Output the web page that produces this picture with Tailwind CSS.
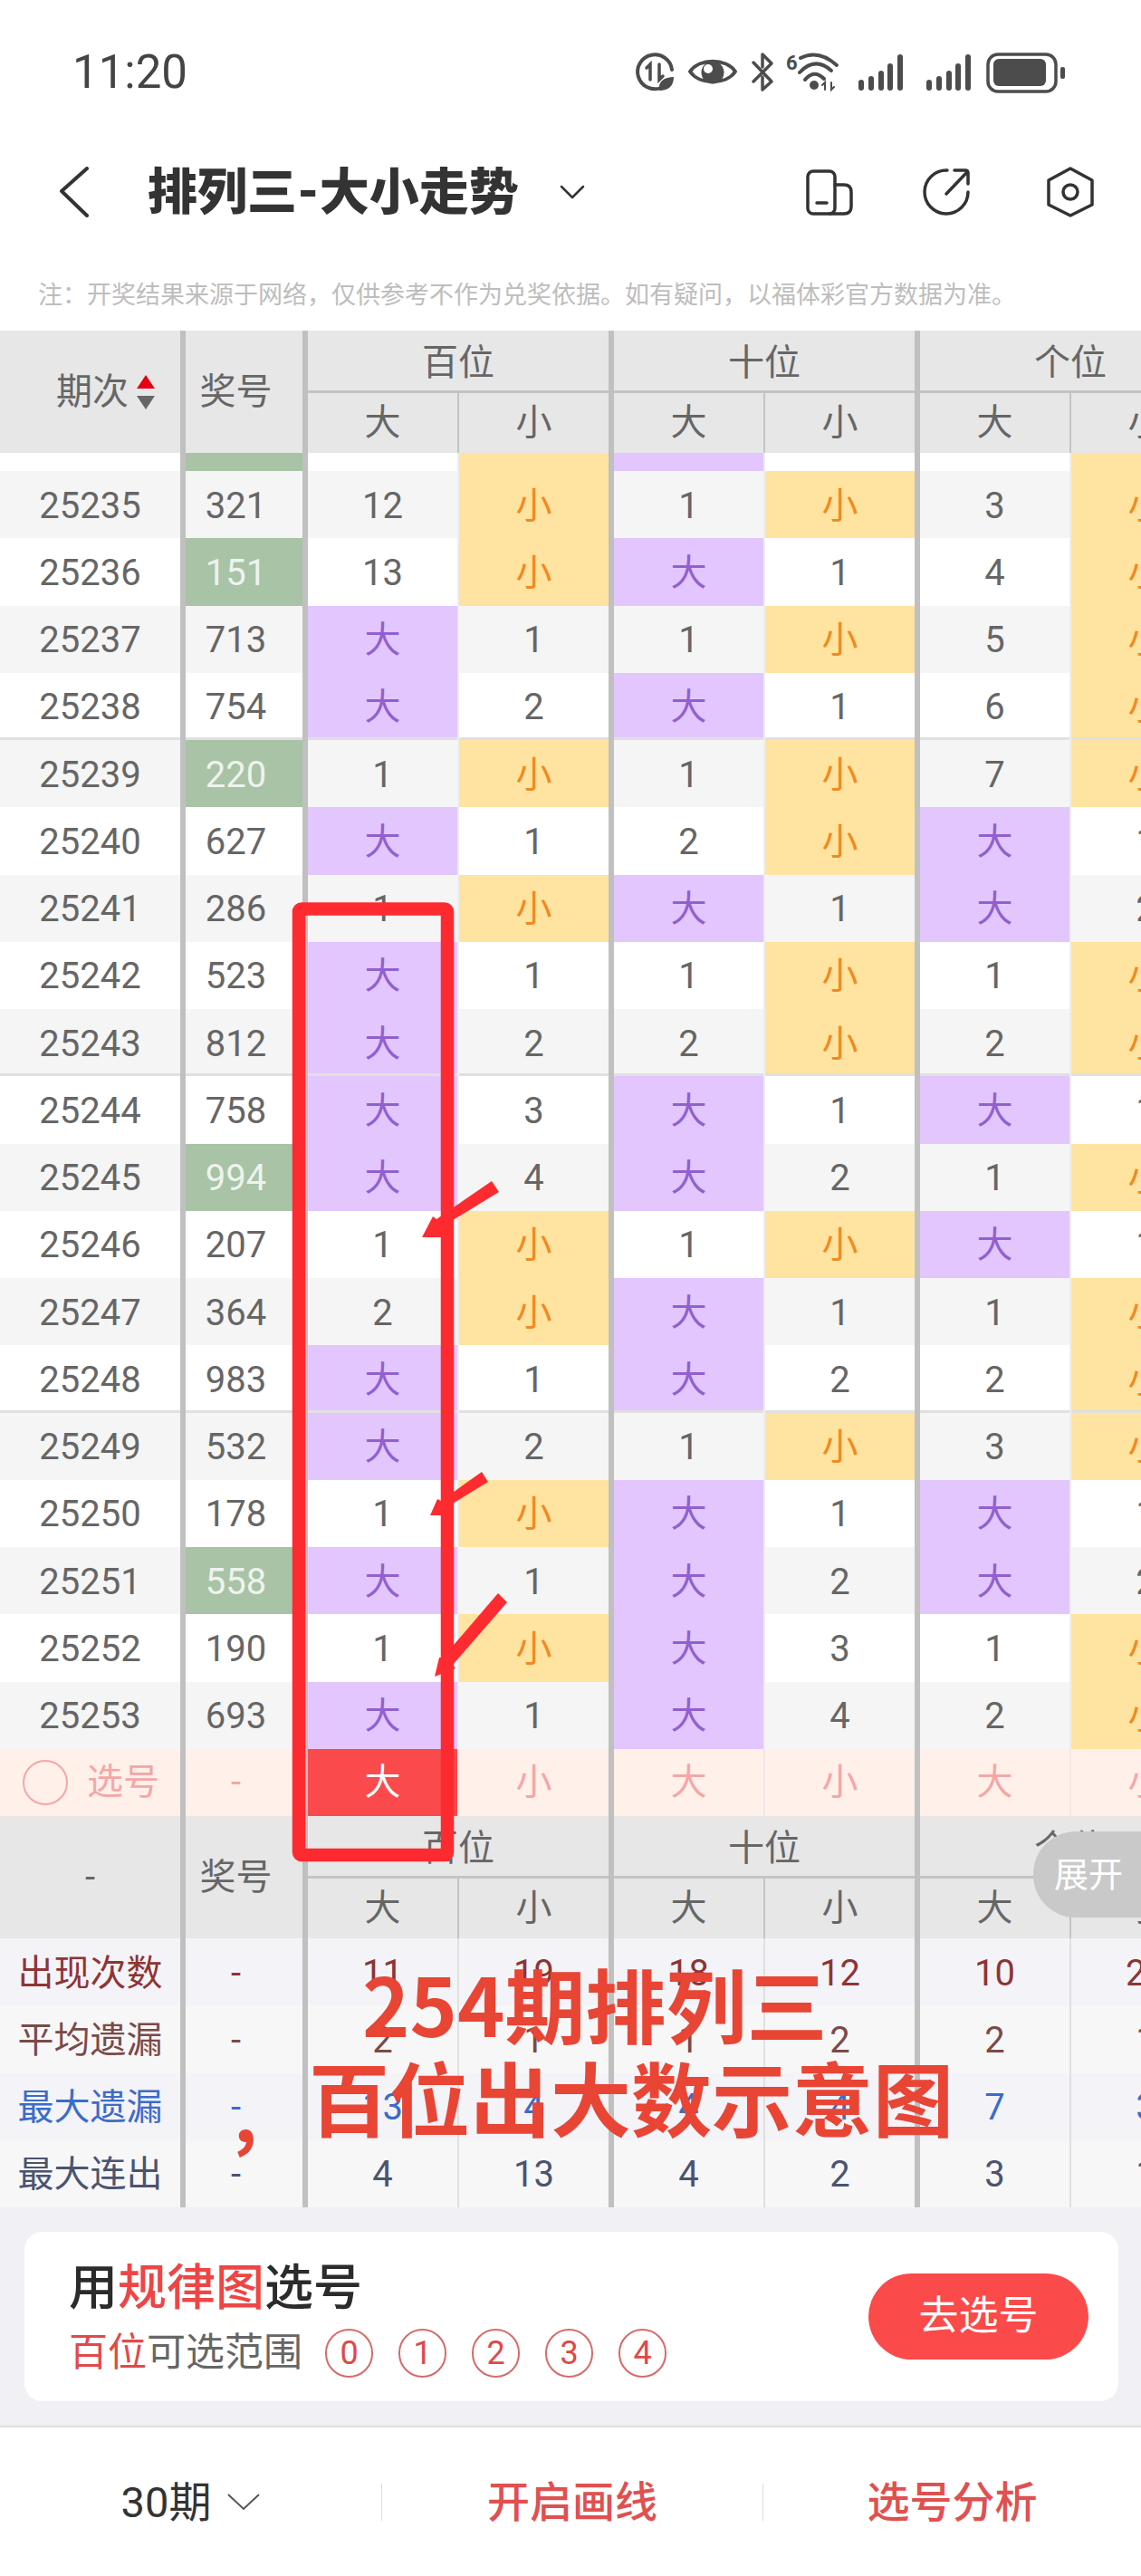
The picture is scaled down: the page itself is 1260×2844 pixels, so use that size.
<!DOCTYPE html>
<html lang="zh-CN">
<head>
    <meta charset="UTF-8">
    <meta name="viewport" content="width=device-width, initial-scale=1.0">
    <title>排列三-大小走势</title>
    <script src="https://cdn.jsdelivr.net/npm/@tailwindcss/browser@4"></script>
</head>
<body class="bg-white">
<div class="relative w-[1260px] h-[2844px] overflow-hidden bg-white font-[Roboto,'Noto_Sans_CJK_SC',sans-serif]">

    <!-- Status bar -->
    <div class="flex items-center h-[158px] pl-[80px]">
        <span class="text-[51px] leading-none text-[#444]">11:20</span>
        <svg class="ml-auto mr-[60px]" width="520" height="75" viewBox="0 0 520 75" fill="none" stroke="#4c4c4c" stroke-width="4" stroke-linecap="round">
            <path d="M50 55A19 19 0 1 1 62 35"/>
            <path d="M38 46V29l-4 4M48 29V46l4-4" stroke-width="3.5"/>
            <path d="M48 58C46 48 54 43 64 43 64 53 58 58 48 58Z" fill="#4c4c4c" stroke="none"/>
            <path d="M82 37C92 22 122 22 132 37 122 52 92 52 82 37Z" stroke-linejoin="round"/>
            <circle cx="107" cy="38" r="12.5" fill="#4c4c4c" stroke="none"/>
            <circle cx="102" cy="34" r="5" fill="#fff" stroke="none"/>
            <path d="M152 48L172 28 162 18V32M152 27L172 48 162 57V43" stroke-width="3.5" stroke-linejoin="round"/>
            <text x="188" y="35" font-size="22" font-weight="700" fill="#4c4c4c" stroke="none">6</text>
            <path d="M204 22Q224 12 244 30M203 38Q220 20 238 36M209 46Q219 34 230 45"/>
            <circle cx="219" cy="52" r="5" fill="#4c4c4c" stroke="none"/>
            <path d="M231 57V49l-3 3M238 49V57l3-3" stroke-width="2"/>
            <g stroke-width="6">
                <path d="M271 49V55M282 45V55M293 39V55M303 31V55M314 21V55"/>
                <path d="M346 49V55M357 45V55M368 39V55M378 31V55M389 21V55"/>
            </g>
            <rect x="411" y="18" width="75" height="41" rx="11" stroke-width="3.5"/>
            <rect x="417" y="23" width="58" height="30" rx="6" fill="#4c4c4c" stroke="none"/>
            <rect x="491" y="32" width="5" height="13" rx="2" fill="#4c4c4c" stroke="none"/>
        </svg>
    </div>

    <!-- Nav bar -->
    <div class="flex items-center h-[108px] pl-[66px]">
        <svg width="32" height="56" viewBox="0 0 32 56" fill="none" stroke="#333" stroke-width="4" stroke-linecap="round" stroke-linejoin="round"><path d="M30 2L2 27 30 54"/></svg>
        <h1 class="ml-[65px] text-[55px] leading-none font-black text-[#333] whitespace-nowrap">排列三-大小走势</h1>
        <svg class="ml-[45px]" width="28" height="16" viewBox="0 0 28 16" fill="none" stroke="#333" stroke-width="2.5" stroke-linecap="round" stroke-linejoin="round"><path d="M2 2L14 14 26 2"/></svg>
        <svg class="ml-auto mr-[30px]" width="370" height="85" viewBox="0 0 370 85" fill="none" stroke="#333" stroke-width="3.5" stroke-linecap="round" stroke-linejoin="round">
            <rect x="32" y="19" width="30" height="47" rx="6"/>
            <path d="M62 34H72Q80 34 80 42V58Q80 66 72 66H56M42 54H53"/>
            <path d="M186 18A24 24 0 1 0 209 42M185 44L208 20M194 18H206Q209 18 209 21V33"/>
            <path d="M322 16L346 29V56L322 68 298 56V29Z"/>
            <circle cx="322" cy="42" r="8"/>
        </svg>
    </div>

    <!-- Notice -->
    <div class="h-[99px] pl-[42px] pt-[47px] text-[27px] leading-[27px] text-[#bdbdbd] whitespace-nowrap">注：开奖结果来源于网络，仅供参考不作为兑奖依据。如有疑问，以福体彩官方数据为准。</div>

    <!-- Trend table -->
    <div id="table" class="w-[1354px] text-[40px] leading-none text-[#666]"></div>

    <!-- Rule picker card -->
    <div class="h-[240.5px] pt-[26.5px] pl-[27px] pr-[25px] bg-[#f0f0f5]">
        <div class="flex items-center h-[187px] rounded-[20px] bg-white pl-[49px] pr-[33px]">
            <div class="mt-[10px]">
                <div class="h-[54px] text-[54px] leading-[54px] font-medium text-[#2b2b2b]">用<span class="text-[#ee4545]">规律图</span>选号</div>
                <div class="flex items-center mt-[17px] h-[54px] text-[43px] leading-none text-[#666]">
                    <span><span class="text-[#e04a4a]">百位</span>可选范围</span>
                    <div class="flex gap-[28px] ml-[25px] text-[36px] text-[#e04848]">
                        <span class="flex items-center justify-center w-[53px] h-[54px] rounded-full border-2 border-[#d86a6a]">0</span>
                        <span class="flex items-center justify-center w-[53px] h-[54px] rounded-full border-2 border-[#d86a6a]">1</span>
                        <span class="flex items-center justify-center w-[53px] h-[54px] rounded-full border-2 border-[#d86a6a]">2</span>
                        <span class="flex items-center justify-center w-[53px] h-[54px] rounded-full border-2 border-[#d86a6a]">3</span>
                        <span class="flex items-center justify-center w-[53px] h-[54px] rounded-full border-2 border-[#d86a6a]">4</span>
                    </div>
                </div>
            </div>
            <button class="ml-auto w-[243px] h-[95px] rounded-full bg-[#fb4a4a] text-white text-[44px] leading-none">去选号</button>
        </div>
    </div>

    <!-- Footer -->
    <div class="grid grid-cols-[421px_421px_418px] items-center h-[167px] border-t-2 border-[#dedede] text-[47px] leading-none">
        <div class="flex items-center justify-center gap-[18px] h-[41px] text-[#333]">
            <span>30期</span>
            <svg width="36" height="20" viewBox="0 0 36 20" fill="none" stroke="#555" stroke-width="2"><path d="M1 2L18 18 35 2"/></svg>
        </div>
        <div class="flex items-center justify-center h-[41px] border-l border-[#ddd] font-medium text-[#e05050]">开启画线</div>
        <div class="flex items-center justify-center h-[41px] border-l border-[#ddd] font-medium text-[#e05050]">选号分析</div>
    </div>

    <!-- Hand-drawn annotation over the table -->
    <svg class="absolute left-0 top-0 pointer-events-none" width="1260" height="2844" viewBox="0 0 1260 2844" fill="#fd2b30">
        <rect x="330" y="1003.5" width="164" height="1044.5" rx="3" fill="none" stroke="#fd2b30" stroke-width="14.5"/>
        <polygon points="466,1366 478,1343 482,1346 543,1304 551,1316 500,1347 490,1366"/>
        <polygon points="475,1673 483,1655 487,1657 532,1625 539,1636 500,1660 492,1673"/>
        <polygon points="480,1851 485,1830 489,1830 550,1759 560,1769 500,1838 503,1842"/>
    </svg>
    <div class="absolute left-[400px] top-[2161px] text-[89px] leading-[100px] font-bold text-[#e84535] whitespace-nowrap font-['Noto_Sans_CJK_SC',sans-serif]">254期排列三</div>
    <div class="absolute left-[341px] top-[2264px] text-[89px] leading-[100px] font-bold text-[#e84535] whitespace-nowrap font-['Noto_Sans_CJK_SC',sans-serif]">百位出大数示意图</div>
    <div class="absolute left-[258px] top-[2280px] text-[80px] leading-[100px] font-bold text-[#e84535] font-['Noto_Sans_CJK_SC',sans-serif]">,</div>

    <!-- Expand pill -->
    <div class="absolute right-0 top-[2022px] flex items-center w-[119px] h-[95px] pl-[23px] rounded-l-[47px] bg-[#c9c9c9] text-[38px] leading-none text-white">展开</div>
</div>

<script>
    const rows = [
        ['25235', '321', 0, [12, 's', 1, 's', 3, 's']],
        ['25236', '151', 1, [13, 's', 'b', 1, 4, 's']],
        ['25237', '713', 0, ['b', 1, 1, 's', 5, 's']],
        ['25238', '754', 0, ['b', 2, 'b', 1, 6, 's']],
        ['25239', '220', 1, [1, 's', 1, 's', 7, 's']],
        ['25240', '627', 0, ['b', 1, 2, 's', 'b', 1]],
        ['25241', '286', 0, [1, 's', 'b', 1, 'b', 2]],
        ['25242', '523', 0, ['b', 1, 1, 's', 1, 's']],
        ['25243', '812', 0, ['b', 2, 2, 's', 2, 's']],
        ['25244', '758', 0, ['b', 3, 'b', 1, 'b', 1]],
        ['25245', '994', 1, ['b', 4, 'b', 2, 1, 's']],
        ['25246', '207', 0, [1, 's', 1, 's', 'b', 1]],
        ['25247', '364', 0, [2, 's', 'b', 1, 1, 's']],
        ['25248', '983', 0, ['b', 1, 'b', 2, 2, 's']],
        ['25249', '532', 0, ['b', 2, 1, 's', 3, 's']],
        ['25250', '178', 0, [1, 's', 'b', 1, 'b', 1]],
        ['25251', '558', 1, ['b', 1, 'b', 2, 'b', 2]],
        ['25252', '190', 0, [1, 's', 'b', 3, 1, 's']],
        ['25253', '693', 0, ['b', 1, 'b', 4, 2, 's']],
    ];
    const stats = [
        ['出现次数', 'bg-[#f3f3f8] text-[#8e3434]', [11, 19, 18, 12, 10, 20]],
        ['平均遗漏', 'bg-[#f7f7f8] text-[#7a4a4a]', [2, 1, 1, 2, 2, 1]],
        ['最大遗漏', 'bg-[#f3f3f8] text-[#3b6cc8]', [13, 4, 4, 4, 7, 3]],
        ['最大连出', 'bg-[#f7f7f8] text-[#4a5470]', [4, 13, 4, 2, 3, 1]],
    ];

    const rowGrid = 'grid grid-cols-[205px_135px_167px_171px_167px_171px_167px_171px]';
    const center = 'flex items-center justify-center';
    const col1 = 'border-r-[6px] border-r-[#c0c0c0]';
    const col2 = 'pr-[18px] border-r-[6px] border-r-[#c0c0c0]';
    const thin = 'border-r-2 border-r-[#eeeeee]';
    const thick = 'border-r-[6px] border-r-[#c0c0c0]';

    const cell = (v, i) => {
        const edge = i % 2 ? thick : thin;
        if (v === 'b') return `<div class="${center} pt-[3px] ${edge} bg-[#e2c6fd] text-[#9060d0]">大</div>`;
        if (v === 's') return `<div class="${center} pt-[3px] ${edge} bg-[#ffe3a0] text-[#f08a20]">小</div>`;
        return `<div class="${center} pt-[3px] ${edge}">${v}</div>`;
    };

    const group = name => `
        <div class="w-[338px] shrink-0 border-r-[6px] border-[#c0c0c0]">
            <div class="${center} h-[69px] pt-[5px] border-b-[3px] border-[#c4c4c4]">${name}</div>
            <div class="grid grid-cols-[167px_165px] h-[66px]">
                <div class="${center} border-r-2 border-[#c4c4c4]">大</div>
                <div class="${center}">小</div>
            </div>
        </div>`;

    const groups = group('百位') + group('十位') + group('个位');

    let html = `
        <div class="flex h-[135px] bg-[#e7e7e7]">
            <div class="flex items-center w-[205px] pl-[62px] ${col1}">
                <span>期次</span>
                <svg class="ml-[9px]" width="20" height="40" viewBox="0 0 20 40"><path d="M10 1L20 16H0Z" fill="#e60012"/><path d="M10 39L20 24H0Z" fill="#666"/></svg>
            </div>
            <div class="${center} w-[135px] ${col2}">奖号</div>
            ${groups}
        </div>
        <div class="${rowGrid} h-[20px] bg-white">
            <div class="${col1}"></div>
            <div class="${col2} bg-[#a8c3a5]"></div>
            <div class="${thin}"></div>
            <div class="${thick} bg-[#ffe3a0]"></div>
            <div class="${thin} bg-[#e2c6fd]"></div>
            <div class="${thick}"></div>
            <div class="${thin}"></div>
            <div class="${thick} bg-[#ffe3a0]"></div>
        </div>`;

    rows.forEach(([issue, num, green, vals], i) => {
        const bg = i % 2 ? 'bg-white' : 'bg-[#f5f5f5]';
        // every fifth issue closes with a divider; the last row runs into the pick row instead
        const line = i % 5 === 3 && i < 18 ? '[&>div]:shadow-[inset_0_-3px_0_#e0e0e0]' : '';
        const numClass = green ? 'bg-[#a8c3a5] text-[#eef3ee]' : '';
        html += `<div class="${rowGrid} h-[74.25px] ${bg} ${line}">
            <div class="${center} pt-[3px] ${col1}">${issue}</div>
            <div class="${center} pt-[3px] ${col2} ${numClass}">${num}</div>
            ${vals.map(cell).join('')}
        </div>`;
    });

    // pick row
    html += `<div class="${rowGrid} h-[74.25px] bg-[#fff0ea] text-[#f5a6a6]">
        <div class="flex items-center pl-[25px] gap-[21px] ${col1}"><span class="w-[50px] h-[50px] rounded-full border-2 border-[#f5a6a6]"></span>选号</div>
        <div class="${center} ${col2}">-</div>
        <div class="${center} bg-[#fa4a4c] text-white border-r-2 border-r-[#f4e6e2]">大</div>
        <div class="${center} ${thick}">小</div>
        <div class="${center} border-r-2 border-r-[#f4e6e2]">大</div>
        <div class="${center} ${thick}">小</div>
        <div class="${center} border-r-2 border-r-[#f4e6e2]">大</div>
        <div class="${center} ${thick}">小</div>
    </div>`;

    html += `
        <div class="flex h-[135px] bg-[#e7e7e7]">
            <div class="${center} w-[205px] ${col1}">-</div>
            <div class="${center} w-[135px] ${col2}">奖号</div>
            ${groups}
        </div>`;

    stats.forEach(([label, tone, vals]) => {
        html += `<div class="${rowGrid} h-[74.25px] ${tone}">
            <div class="${center} pt-[3px] ${col1}">${label}</div>
            <div class="${center} pt-[3px] ${col2}">-</div>
            ${vals.map((v, i) => `<div class="${center} pt-[3px] ${i % 2 ? thick : 'border-r-2 border-r-[#e0e0e0]'}">${v}</div>`).join('')}
        </div>`;
    });

    document.getElementById('table').innerHTML = html;
</script>
</body>
</html>
